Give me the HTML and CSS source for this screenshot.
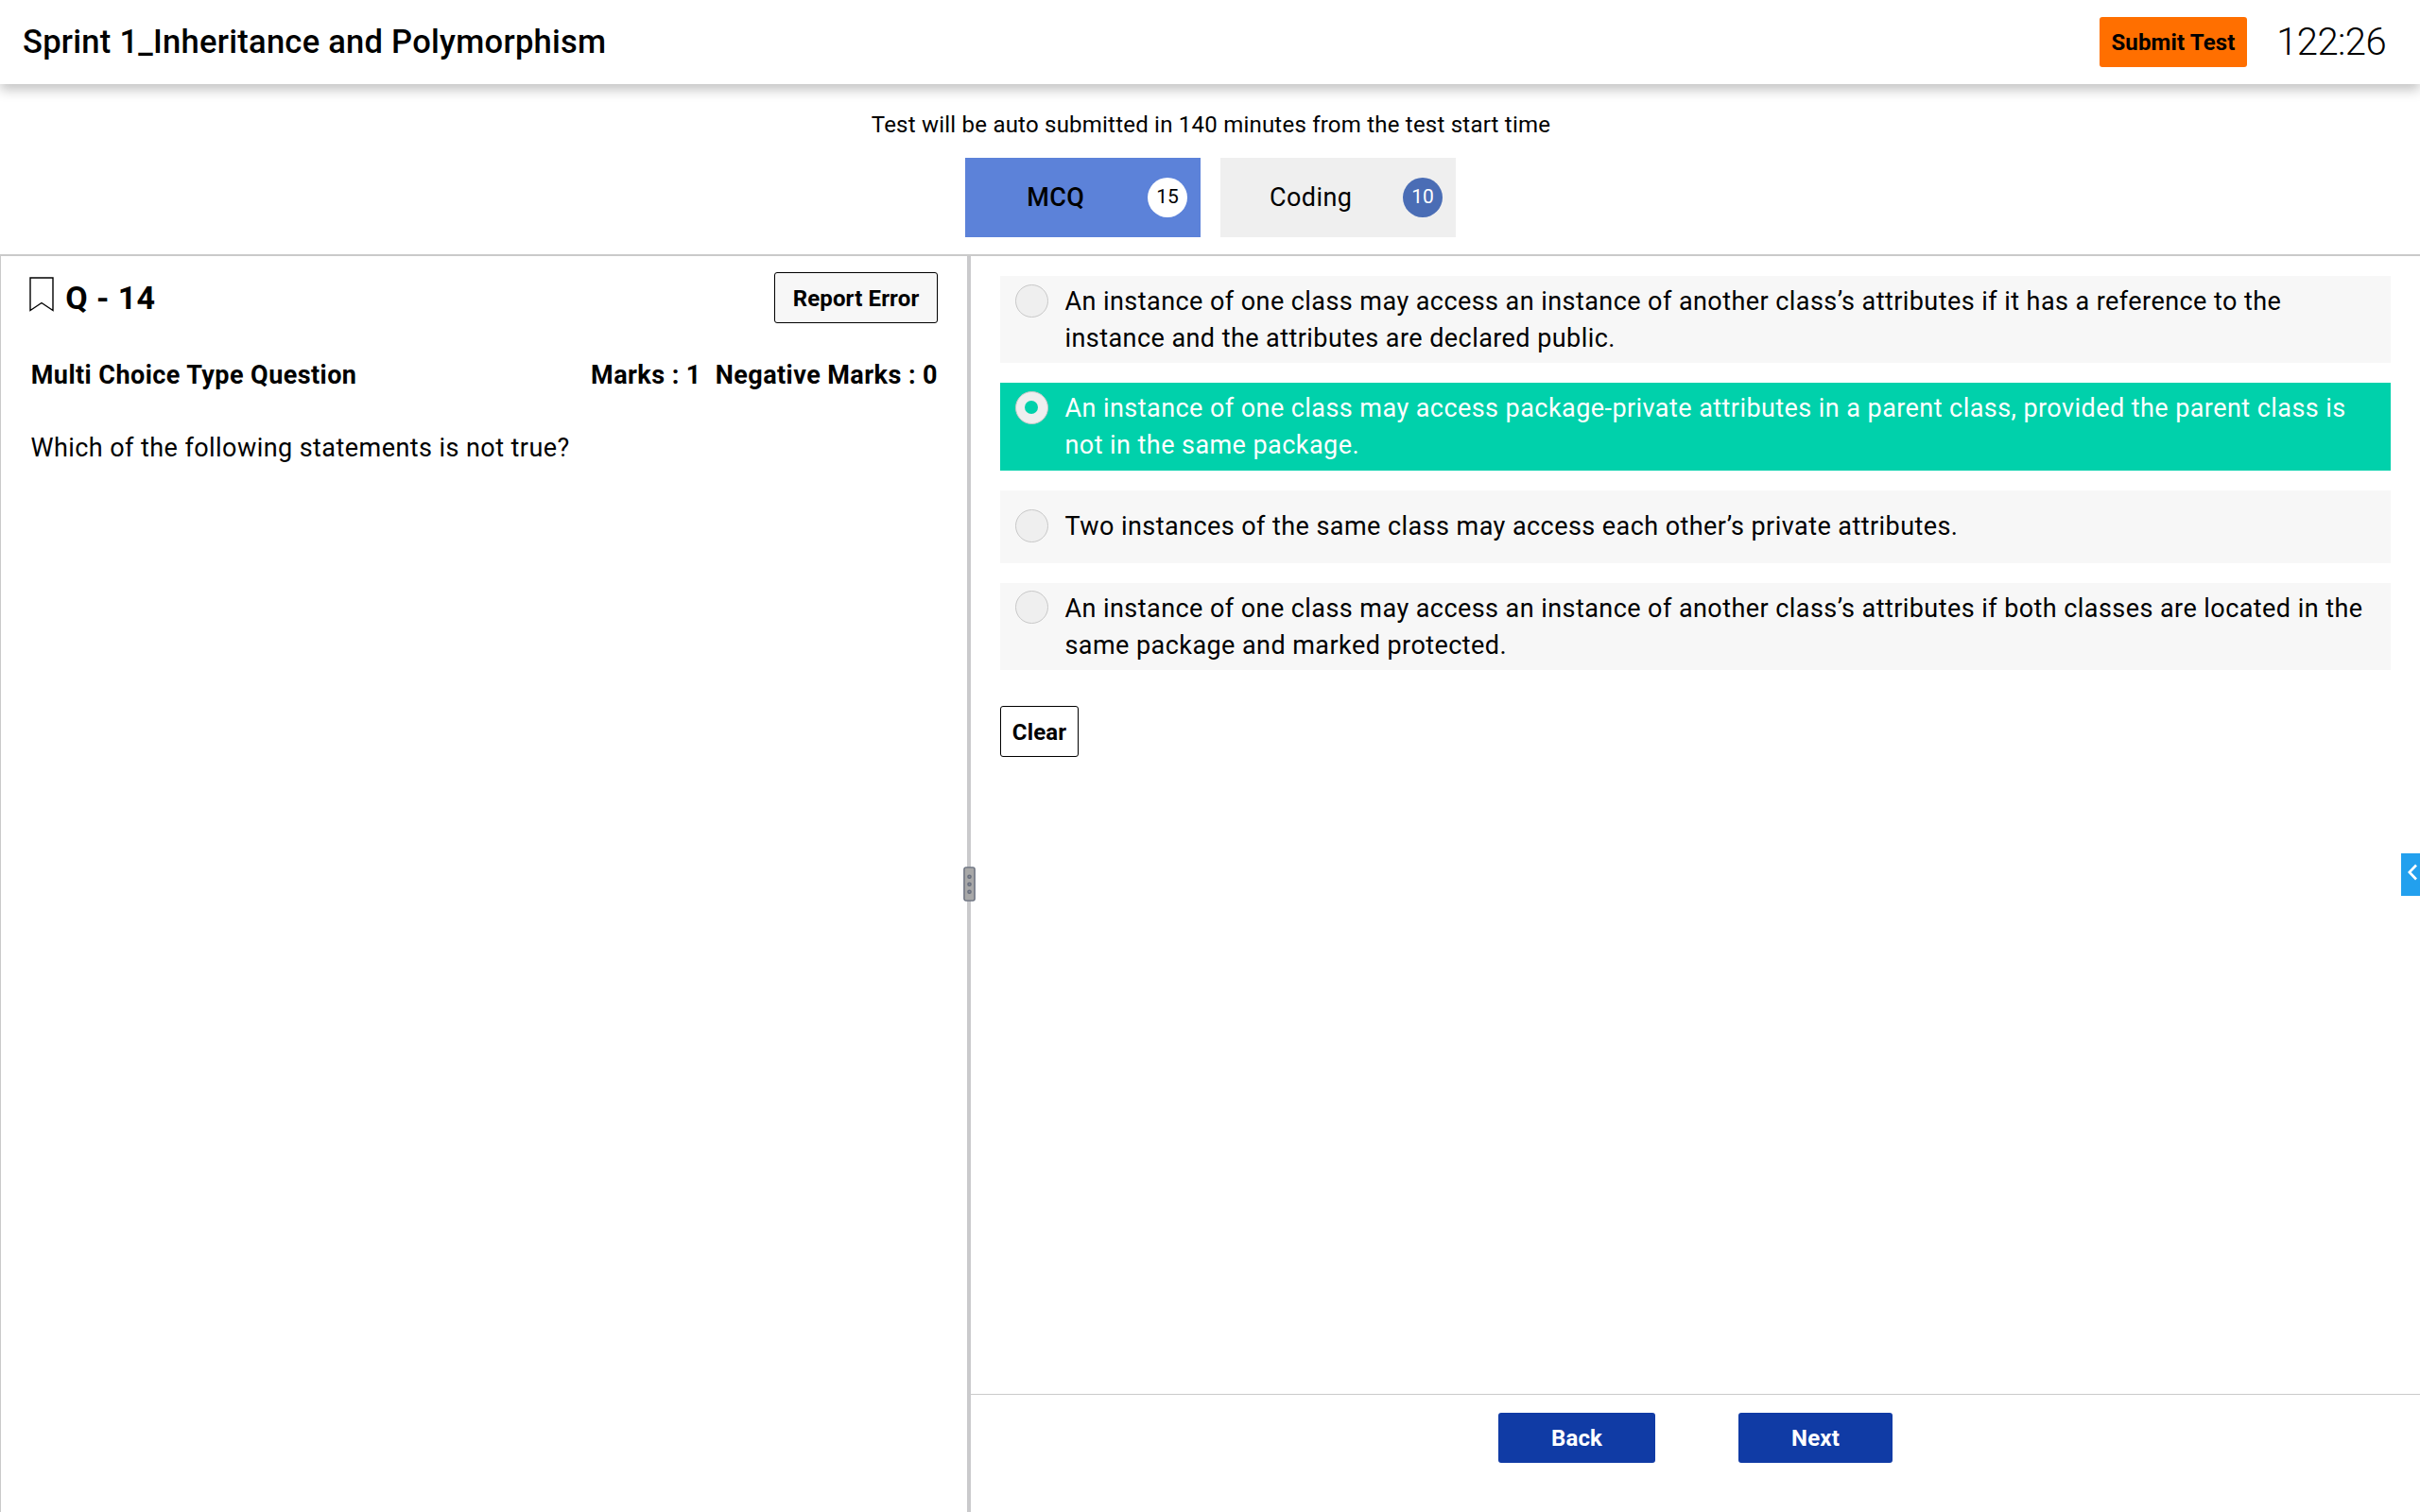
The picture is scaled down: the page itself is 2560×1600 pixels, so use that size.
FILE: index.html
```html
<!DOCTYPE html>
<html lang="en">
<head>
<meta charset="utf-8">
<title>Sprint 1_Inheritance and Polymorphism</title>
<link rel="stylesheet" href="styles.css">
</head>
<body>
<header class="topbar">
  <h1 class="title">Sprint 1_Inheritance and Polymorphism</h1>
  <button class="btn submit">Submit Test</button>
  <div class="timer">122:26</div>
</header>
<section class="sections">
  <p class="notice">Test will be auto submitted in 140 minutes from the test start time</p>
  <nav class="tabs">
    <a class="tab active"><span class="tab-name">MCQ</span><span class="count">15</span></a>
    <a class="tab"><span class="tab-name">Coding</span><span class="count">10</span></a>
  </nav>
</section>
<main class="workspace">
  <section class="question">
    <div class="question-head">
      <svg class="bookmark" viewBox="0 0 26 37"><path d="M1 1H25V35.5L13 27.5L1 35.5Z"/></svg>
      <h2 class="number">Q - 14</h2>
      <button class="btn report">Report Error</button>
    </div>
    <div class="meta"><span>Multi Choice Type Question</span><span class="marks"><span>Marks : 1</span><span>Negative Marks : 0</span></span></div>
    <p class="prompt">Which of the following statements is not true?</p>
  </section>
  <div class="splitter"><svg class="grip" viewBox="0 0 13 37"><rect class="grip-body" x=".9" y=".9" width="11.2" height="35.2" rx="2"/><circle cx="6.5" cy="10.7" r="1.6"/><circle cx="6.5" cy="18.7" r="1.6"/><circle cx="6.5" cy="26.7" r="1.6"/></svg></div>
  <section class="answers">
    <div class="options">
      <label class="option"><i class="radio"></i><span>An instance of one class may access an instance of another class’s attributes if it has a reference to the instance and the attributes are declared public.</span></label>
      <label class="option selected"><i class="radio"></i><span>An instance of one class may access package-private attributes in a parent class, provided the parent class is not in the same package.</span></label>
      <label class="option single"><i class="radio"></i><span>Two instances of the same class may access each other’s private attributes.</span></label>
      <label class="option last"><i class="radio"></i><span>An instance of one class may access an instance of another class’s attributes if both classes are located in the same package and marked protected.</span></label>
      <button class="btn clear">Clear</button>
    </div>
    <footer class="pager">
      <button class="btn back">Back</button>
      <button class="btn next">Next</button>
    </footer>
  </section>
</main>
<div class="drawer-toggle"><svg class="chevron" viewBox="0 0 10 18"><path d="M9 1.5L1.8 9L9 16.5"/></svg></div>
</body>
</html>
```
FILE: styles.css
```css
* { box-sizing: border-box; }

body {
  margin: 0;
  height: 1600px;
  display: flex;
  flex-direction: column;
  overflow: hidden;
  background: #fff;
  color: #000;
  font-family: Roboto, "Liberation Sans", sans-serif;
  font-size: 27px;
  letter-spacing: .435px;
}

h1, h2, p { margin: 0; }

.btn {
  height: 53px;
  padding: 0;
  border: 0;
  border-radius: 3px;
  color: #000;
  font: 700 24px/52px Roboto, "Liberation Sans", sans-serif;
  letter-spacing: .15px;
}

.topbar {
  flex: none;
  display: flex;
  align-items: center;
  height: 89px;
  padding: 0 36px 0 24px;
  background: #fff;
  box-shadow: 0 6px 12px rgba(0, 0, 0, .24);
}

.title {
  flex: 1;
  font-size: 34.5px;
  font-weight: 500;
  line-height: 88px;
  letter-spacing: .27px;
  padding-bottom: 1px;
}

.submit { width: 156px; background: #ff6f00; }

.timer {
  width: 147px;
  text-align: right;
  font-size: 40px;
  font-weight: 300;
  line-height: 88px;
  letter-spacing: -.6px;
}

.sections {
  flex: none;
  height: 182px;
  padding-top: 24px;
  border-bottom: 2px solid #cacaca;
}

.notice {
  height: 54px;
  padding-left: 2px;
  text-align: center;
  font-size: 24px;
  line-height: 38px;
  letter-spacing: .22px;
}

.tabs {
  display: flex;
  justify-content: center;
  gap: 21px;
}

.tab {
  display: flex;
  align-items: center;
  width: 249px;
  height: 84px;
  padding: 0 13.5px 0 0;
  background: #efefef;
}

.tab-name { flex: 1; padding-right: 1px; text-align: center; }

.count {
  width: 42px;
  height: 42px;
  border-radius: 50%;
  background: #4a6db5;
  color: #fff;
  text-align: center;
  font-size: 21px;
  line-height: 41px;
  letter-spacing: 0;
}

.active { background: #5c82d9; }
.active .tab-name { font-weight: 500; }
.active .count { background: #fff; color: #000; }

.workspace {
  flex: 1;
  display: flex;
  min-height: 0;
}

.question {
  width: 1023px;
  padding: 17px 31px 0;
  border-left: 1px solid #cacaca;
}

.question-head { display: flex; align-items: flex-start; }

.bookmark {
  width: 26px;
  height: 37px;
  margin: 4.5px 12px 0 -.8px;
  fill: none;
  stroke: #000;
  stroke-width: 1.4;
}

.number {
  flex: 1;
  font-size: 34px;
  font-weight: 700;
  line-height: 54px;
}

.report {
  width: 173px;
  height: 54px;
  padding-top: 1px;
  border: 1px solid #000;
  background: #f7f7f7;
}

.meta {
  display: flex;
  justify-content: space-between;
  margin-top: 35px;
  padding-left: .8px;
  font-weight: 700;
  line-height: 40px;
}

.marks { display: flex; gap: 15px; }

.prompt { margin-top: 37px; padding-left: .5px; line-height: 40px; }

.splitter {
  display: flex;
  align-items: center;
  justify-content: center;
  width: 4px;
  background: #cacacc;
}

.grip {
  flex: none;
  width: 13px;
  height: 37px;
  fill: #8a8f99;
  stroke: #666d7c;
  stroke-width: 1.4;
}

.grip-body { fill: #a8a8a8; }

.answers {
  flex: 1;
  display: flex;
  flex-direction: column;
}

.options { flex: 1; padding: 21px 31px 0; }

.option {
  display: flex;
  align-items: flex-start;
  gap: 17.5px;
  height: 92px;
  margin-bottom: 21px;
  padding: 9px 16px 0;
  background: #f7f7f7;
  line-height: 39px;
}

.option span { margin-top: -1px; }

.radio {
  flex: none;
  display: flex;
  width: 35px;
  height: 35px;
  border: 1px solid #c8c8c8;
  border-radius: 50%;
  background: #efefef;
}

.selected { height: 93px; background: #00d1ab; color: #fff; }

.selected .radio::after {
  content: "";
  width: 14px;
  height: 14px;
  margin: 9px;
  border-radius: 50%;
  background: #00d1ab;
}

.single { height: 77px; padding-top: 20px; }
.last { padding-top: 8px; }
.last span { margin-top: 0; }

.clear {
  width: 83px;
  height: 54px;
  margin-top: 17px;
  padding-top: 1px;
  border: 1px solid #000;
  background: #fff;
}

.pager {
  display: flex;
  justify-content: center;
  gap: 88px;
  height: 125px;
  padding-top: 19px;
  border-top: 1px solid #cacaca;
}

.back, .next {
  width: 166px;
  background: #103ba5;
  color: #fff;
}

.next { width: 163px; }

.drawer-toggle {
  position: absolute;
  top: 903px;
  right: 0;
  display: flex;
  width: 20px;
  height: 45px;
  padding: 11px 0 0 7px;
  background: #22a0ee;
}

.chevron {
  width: 10px;
  height: 18px;
  fill: none;
  stroke: #fff;
  stroke-width: 2.6;
}
```
